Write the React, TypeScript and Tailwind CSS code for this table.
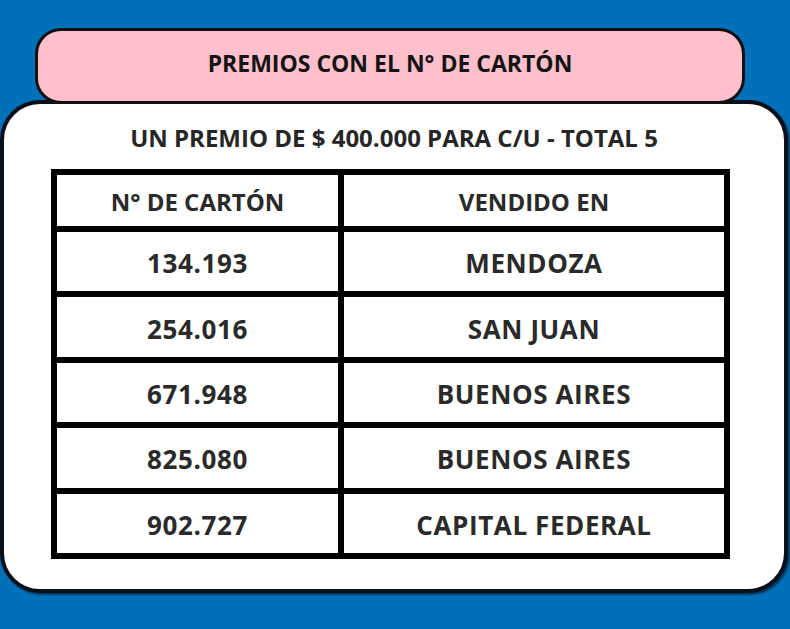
const rows = [
  { carton: "134.193", lugar: "MENDOZA" },
  { carton: "254.016", lugar: "SAN JUAN" },
  { carton: "671.948", lugar: "BUENOS AIRES" },
  { carton: "825.080", lugar: "BUENOS AIRES" },
  { carton: "902.727", lugar: "CAPITAL FEDERAL" },
];

export default function App() {
  return (
    <div
      className="w-[790px] h-[629px] bg-[#0070b9] pt-[28px] overflow-hidden"
      style={{ fontFamily: '"Open Sans", "Noto Sans", sans-serif' }}
    >
      <div className="relative z-10 ml-[35px] w-[710px] h-[76px] pb-[5px] bg-[#ffc0cb] border-[3px] border-[#111] rounded-[26px] flex items-center justify-center">
        <h1 className="text-[23px] font-bold text-[#141414]">
          PREMIOS CON EL N° DE CARTÓN
        </h1>
      </div>

      <div className="-mt-[4px] w-[788px] h-[493px] bg-white border-[4px] border-[#0a0f1a] rounded-[40px] shadow-[2px_2px_2px_rgba(0,0,0,0.5)]">
        <p className="pt-[20px] text-center text-[24px] leading-[28px] font-bold text-[#262626]">
          UN PREMIO DE $ 400.000 PARA C/U - TOTAL 5
        </p>

        <div className="mt-[17px] ml-[47px] w-[679px] bg-black p-[6px] grid grid-cols-[281px_380px] gap-[6px]">
          <div className="h-[51px] pt-[3px] bg-white flex items-center justify-center text-[24px] font-bold text-[#2a2a2a]">
            N° DE CARTÓN
          </div>
          <div className="h-[51px] pt-[3px] bg-white flex items-center justify-center text-[24px] font-bold text-[#2a2a2a]">
            VENDIDO EN
          </div>
          {rows.map((r) => (
            <>
              <div
                key={r.carton}
                className="h-[59.4px] pt-[4px] bg-white flex items-center justify-center text-[26px] font-bold text-[#2a2a2a] tracking-[0.6px]"
              >
                {r.carton}
              </div>
              <div
                key={r.carton + "-l"}
                className="h-[59.4px] pt-[4px] bg-white flex items-center justify-center text-[26px] font-bold text-[#2a2a2a] tracking-[0.6px]"
              >
                {r.lugar}
              </div>
            </>
          ))}
        </div>
      </div>
    </div>
  );
}
